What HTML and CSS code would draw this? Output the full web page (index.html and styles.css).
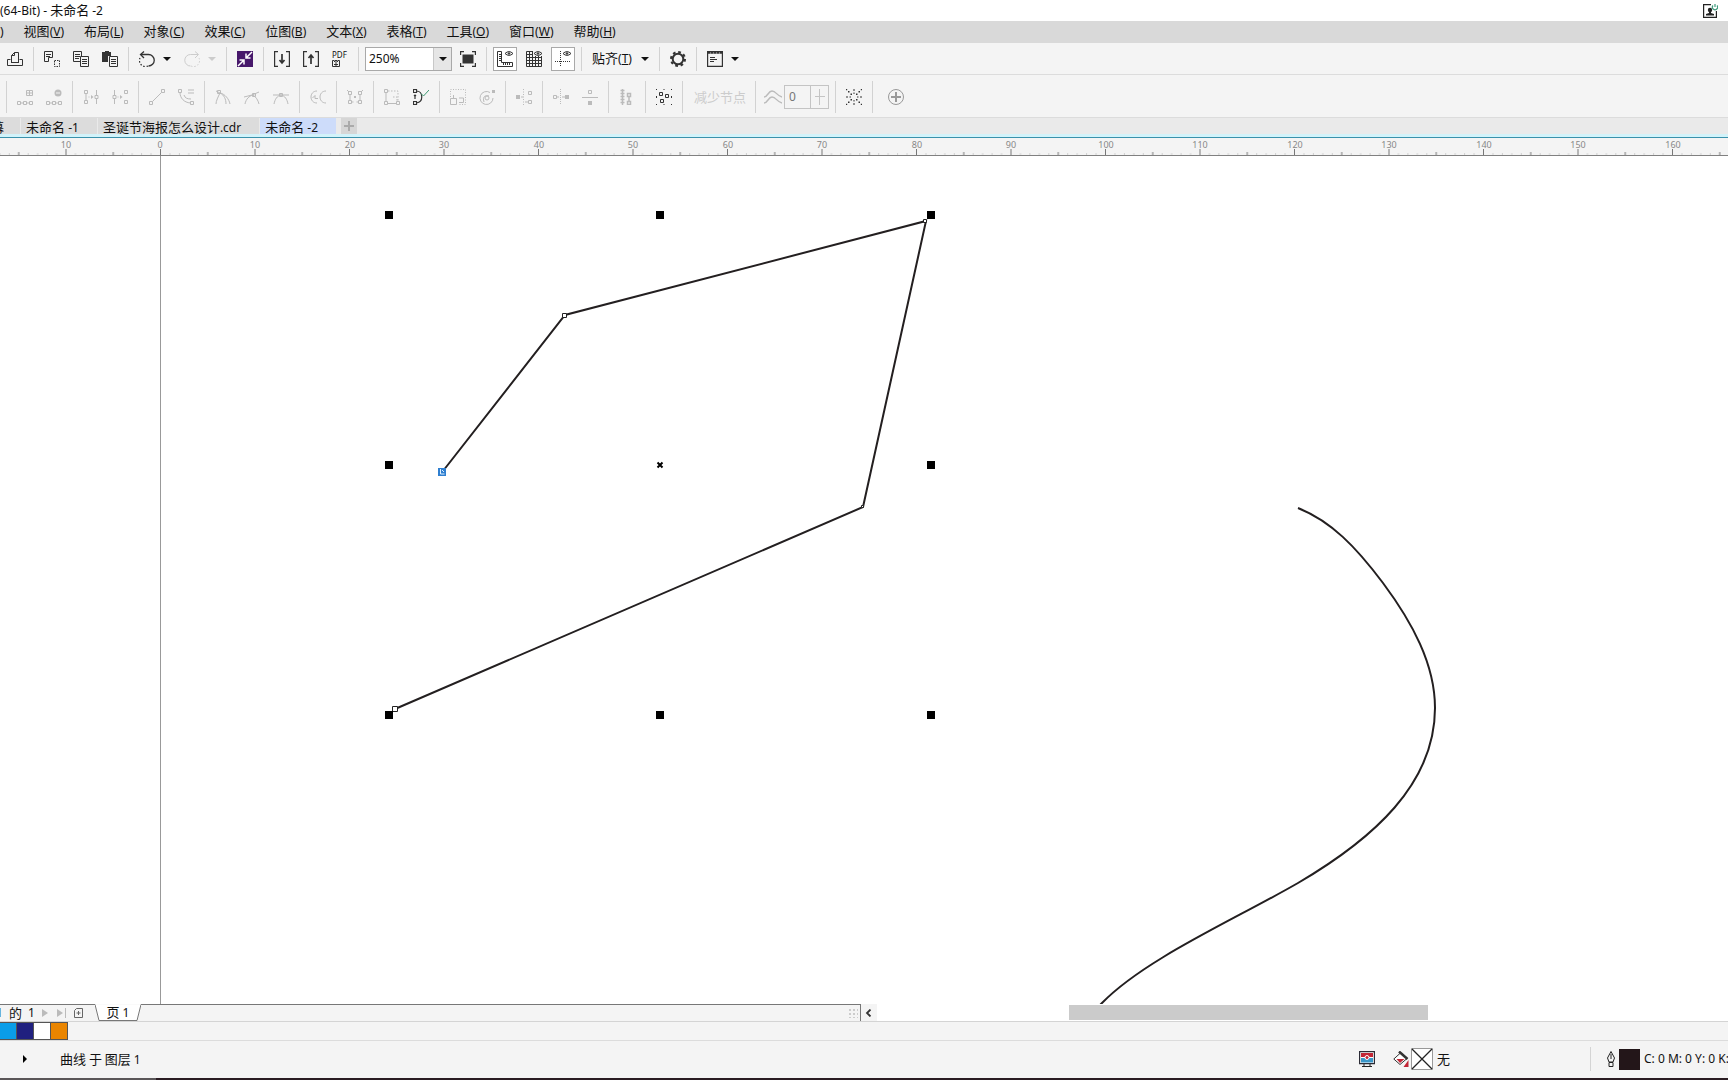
FILE: index.html
```html
<!DOCTYPE html>
<html lang="zh-CN">
<head>
<meta charset="utf-8">
<title>(64-Bit) - 未命名 -2</title>
<link rel="stylesheet" href="styles.css">
</head>
<body>
<div class="app">
  <header class="titlebar">
    <h1 class="title"><span class="latin">(64-Bit) - </span>未命名<span class="latin"> -2</span></h1>
    <button class="account" aria-label="账户">
      <svg class="icon" viewBox="0 0 16 16"><path d="M9 1.600H1.600v12.800h12.800V8" fill="none" stroke="#222" stroke-width="1.200"/><circle cx="8" cy="7" r="2.200" fill="#222"/><path d="M7 8h2v2l3 1v1.500H4V11l3-1z" fill="#222"/><path d="M11 2.500a2.600 2.600 0 1 0 4 0M13 1v3" fill="none" stroke="#3f9a7c" stroke-width="1.200"/></svg>
    </button>
  </header>

  <nav class="menubar">
    <button class="menu"><span class="latin">)</span></button>
    <button class="menu">视图<span class="latin">(<u>V</u>)</span></button>
    <button class="menu">布局<span class="latin">(<u>L</u>)</span></button>
    <button class="menu">对象<span class="latin">(<u>C</u>)</span></button>
    <button class="menu">效果<span class="latin">(<u>C</u>)</span></button>
    <button class="menu">位图<span class="latin">(<u>B</u>)</span></button>
    <button class="menu">文本<span class="latin">(<u>X</u>)</span></button>
    <button class="menu">表格<span class="latin">(<u>T</u>)</span></button>
    <button class="menu">工具<span class="latin">(<u>O</u>)</span></button>
    <button class="menu">窗口<span class="latin">(<u>W</u>)</span></button>
    <button class="menu">帮助<span class="latin">(<u>H</u>)</span></button>
  </nav>

  <div class="toolbar standard" role="toolbar" aria-label="标准">
    <button class="tool" aria-label="打印"><svg class="icon" viewBox="0 0 16 16"><path d="M3.500 8.500h-3v6h15v-6h-3M4.500 11.500v-7l3-3h4v10zM4 11.500h8M4.500 4.500h3v-3" fill="none"/></svg></button>
    <i class="sep"></i>
    <button class="tool" aria-label="剪切"><svg class="icon" viewBox="0 0 16 16"><path d="M.500 .500h8v6h-4v4h-4zM2 3.500h5M2 5.500h4" fill="none"/><path d="M10.500 9.500h5v6h-5z" fill="none" stroke-dasharray="1.500 1"/></svg></button>
    <button class="tool" aria-label="复制"><svg class="icon" viewBox="0 0 16 16"><path d="M7 10.500H.500V.500h8V5M2 3.500h5M2 5.500h5M2 7.500h4M7.500 5.500h8v10h-8zM9 8.500h5M9 10.500h5M9 12.500h5" fill="none"/></svg></button>
    <button class="tool" aria-label="粘贴"><svg class="icon" viewBox="0 0 16 16"><path d="M0 1h3V0h4v1h2v4H6v6H0z" stroke="none"/><path d="M7.500 5.500h8v10h-8zM9 8.500h5M9 10.500h5M9 12.500h5" fill="#f4f4f4"/></svg></button>
    <i class="sep"></i>
    <button class="tool" aria-label="撤消"><svg class="icon" viewBox="0 0 16 16"><path d="M2 3.500h7.500a5.500 5.500 0 0 1 0 11.500" fill="none" stroke-width="1.300"/><path d="M9 15a6 6 0 0 1-8-8" fill="none" stroke-dasharray="1.500 1.800" stroke-width="1.300"/><path d="M5 .5 1.500 3.500 5 7" fill="none" stroke-width="1.300"/></svg></button>
    <button class="drop" aria-label="撤消列表"></button>
    <button class="tool faint" aria-label="重做" disabled><svg class="icon" viewBox="0 0 16 16"><path d="M14 3.500H6.500a5.500 5.500 0 0 0 0 11.500" fill="none"/><path d="M7 15a6 6 0 0 0 8-8" fill="none" stroke-dasharray="1.500 1.800"/><path d="M11 .5l3.500 3L11 7" fill="none"/></svg></button>
    <button class="drop faint" aria-label="重做列表" disabled></button>
    <i class="sep"></i>
    <button class="tool" aria-label="搜索内容"><svg class="icon" viewBox="0 0 16 16"><path d="M0 0h16v16H0z" fill="#47186b" stroke="none"/><path d="M15 1 9.500 6.500M9 2.500V7h4.500M1 15l5.500-5.500M2.500 9H7v4.500" fill="none" stroke="#fff" stroke-width="1.500"/></svg></button>
    <i class="sep"></i>
    <button class="tool" aria-label="导入"><svg class="icon" viewBox="0 0 16 16"><path d="M4 .600H.600v14.800H4M12 .600h3.400v14.800H12" fill="none" stroke-width="1.200"/><path d="M8 3v9M5.500 9 8 12l2.500-3" fill="none" stroke-width="1.700"/></svg></button>
    <button class="tool" aria-label="导出"><svg class="icon" viewBox="0 0 16 16"><path d="M4 .600H.600v14.800H4M12 .600h3.400v14.800H12" fill="none" stroke-width="1.200"/><path d="M8 13V4M5.500 7 8 4l2.500 3" fill="none" stroke-width="1.700"/></svg></button>
    <button class="tool pdf" aria-label="发布为 PDF"><span class="pdf-text">PDF</span><svg class="pdf-icon" viewBox="0 0 8 8"><path d="M2.500 1.500h-2v6h7v-6h-2M4 7V1M2 3l2-2 2 2M2 5.500h4" fill="none"/></svg></button>
    <i class="sep"></i>
    <div class="combo">
      <input class="combo-input" type="text" value="250%" aria-label="缩放级别">
      <button class="combo-btn" aria-label="缩放列表"></button>
    </div>
    <button class="tool" aria-label="全屏预览"><svg class="icon" viewBox="0 0 16 16"><path d="M2.500 3.500h11v9h-11z" stroke="none"/><path d="M0 .600h4M.600 0v4M12 .600h4M15.400 0v4M0 15.400h4M.600 16v-4M12 15.400h4M15.400 16v-4" stroke-width="1.200"/></svg></button>
    <i class="sep"></i>
    <button class="tool active" aria-label="显示标尺"><svg class="icon" viewBox="0 0 16 16"><path d="M.500 .500h4v11h11v4H.500zM2 3.500h2.500M2 5.500h2.500M2 7.500h2.500M2 9.500h2.500M6.500 12v2M8.500 12v2M10.500 12v2M12.500 12v2" fill="none"/><path d="M8 2.500q4-3.800 8 0-4 3.800-8 0z" fill="none"/><circle cx="12" cy="2.500" r=".8"/></svg></button>
    <button class="tool" aria-label="显示网格"><svg class="icon" viewBox="0 0 16 16"><path d="M7 .500H.500v15h15V5M3.500 0v16M6.500 0v16M9.500 5v11M12.500 5v11M0 3.500h7M0 6.500h16M0 9.500h16M0 12.500h16" fill="none"/><path d="M8 2.500q4-3.800 8 0-4 3.800-8 0z" fill="none"/><circle cx="12" cy="2.500" r=".8"/></svg></button>
    <button class="tool active" aria-label="显示辅助线"><svg class="icon" viewBox="0 0 16 16"><path d="M5.500 0v16M0 10.500h16" fill="none" stroke-dasharray="1 1"/><path d="M8 2.500q4-3.800 8 0-4 3.800-8 0z" fill="none"/><circle cx="12" cy="2.500" r=".8"/></svg></button>
    <i class="sep"></i>
    <button class="snap">贴齐<span class="latin">(<u>T</u>)</span></button>
    <button class="drop" aria-label="贴齐列表"></button>
    <i class="sep"></i>
    <button class="tool" aria-label="选项"><svg class="icon" viewBox="0 0 16 16"><circle cx="8" cy="8" r="5.300" fill="none" stroke-width="2"/><circle cx="8" cy="8" r="7" fill="none" stroke-width="2" stroke-dasharray="2.750 2.750"/></svg></button>
    <i class="sep"></i>
    <button class="tool" aria-label="应用程序启动器"><svg class="icon" viewBox="0 0 16 16"><path d="M.600 .600h14.800v14.800H.600z" fill="none" stroke-width="1.200"/><path d="M1 2h14M3 6.500h5M3 8.500h7M3 10.500h4" fill="none"/><path d="M1 1.500h14" stroke-dasharray="2 1" stroke-width="2"/></svg></button>
    <button class="drop" aria-label="启动器列表"></button>
  </div>

  <div class="toolbar property" role="toolbar" aria-label="属性栏">
    <i class="sep"></i>
    <button class="tool dim" aria-label="添加节点"><svg class="icon" viewBox="0 0 16 16"><path d="M.500 12.500h3v3h-3zM6.500 12.500h3v3h-3zM12.500 12.500h3v3h-3zM3.500 14h3M9.500 14h3M9.500 1.500h6v5h-6zM12.500 1v6M9 4h7" fill="none"/></svg></button>
    <button class="tool dim" aria-label="删除节点"><svg class="icon" viewBox="0 0 16 16"><path d="M.500 12.500h3v3h-3zM6.500 12.500h3v3h-3zM12.500 12.500h3v3h-3zM3.500 14h3M9.500 14h3" fill="none"/><circle cx="12" cy="4" r="3.500" stroke="none"/><path d="M10 4h4" stroke="#f4f4f4"/></svg></button>
    <i class="sep"></i>
    <button class="tool dim" aria-label="连接节点"><svg class="icon" viewBox="0 0 16 16"><path d="M1.500 1.500h3v3h-3zM1.500 11.500h3v3h-3zM3 5v6M13.500 1v5M12 6.500h3v3h-3zM13.500 10v5" fill="none"/><path d="M5.500 7.500h1v1h-1zM8 6l2.500 2L8 10z" stroke="none"/></svg></button>
    <button class="tool dim" aria-label="断开曲线"><svg class="icon" viewBox="0 0 16 16"><path d="M2.500 1v5M1 6.500h3v3H1zM2.500 10v5M12.500 1.500h3v3h-3zM12.500 11.500h3v3h-3z" fill="none"/><path d="M5.500 7.500h1v1h-1zM8 6l2.500 2L8 10z" stroke="none"/></svg></button>
    <i class="sep"></i>
    <button class="tool dim" aria-label="转换为线条"><svg class="icon" viewBox="0 0 16 16"><path d="M.500 12.500h3v3h-3zM12.500 .500h3v3h-3zM3.500 12.500l9-9" fill="none"/></svg></button>
    <button class="tool dim" aria-label="转换为曲线"><svg class="icon" viewBox="0 0 16 16"><path d="M.500 .500h3v3h-3zM12.500 12.500h3v3h-3zM2 3.500C2 9 6 13.500 12.500 14M6 6c1 3 3 4 7 4M10 1h6M10 4h6" fill="none"/></svg></button>
    <i class="sep"></i>
    <button class="tool dim" aria-label="尖突节点"><svg class="icon" viewBox="0 0 16 16"><path d="M2.500 1.500h3v3h-3zM1 2l4 2c5 1 9 6 10 11M5 4c-2 4-4 8-4 11M5 4c4 2 6 6 6 11" fill="none"/></svg></button>
    <button class="tool dim" aria-label="平滑节点"><svg class="icon" viewBox="0 0 16 16"><path d="M8.500 4.500h3v3h-3zM0 8l8-2 7-3M1 15c1-5 4-8 8-9 3 2 5 5 6 9" fill="none"/></svg></button>
    <button class="tool dim" aria-label="对称节点"><svg class="icon" viewBox="0 0 16 16"><path d="M6.500 4.500h3v3h-3zM0 6h16M1 15c1-5 3-8 7-9 4 1 6 4 7 9" fill="none"/></svg></button>
    <i class="sep"></i>
    <button class="tool dim" aria-label="反转方向"><svg class="icon" viewBox="0 0 16 16"><path d="M7 2C-1 2-1 14 7 14M16 2C8 2 8 14 16 14M5 6.500 2.500 9M5 6.500v3h3" fill="none"/></svg></button>
    <i class="sep"></i>
    <button class="tool dim" aria-label="延长曲线使之闭合"><svg class="icon" viewBox="0 0 16 16"><path d="M1.500 2.500h3v3h-3zM11.500 2.500h3v3h-3zM1.500 11.500h3v3h-3zM11.500 11.500h3v3h-3zM3 6v5M13 6v5M4.500 13h2M9.500 13h2M0 1l2 2M16 1l-2 2" fill="none"/><path d="M7 7h2v2H7z" stroke="none"/></svg></button>
    <i class="sep"></i>
    <button class="tool dim" aria-label="提取子路径"><svg class="icon" viewBox="0 0 16 16"><path d="M.500 .500h3v3h-3zM.500 12.500h3v3h-3zM12.500 12.500h3v3h-3zM2 4v8M4 14.500h8" fill="none"/><path d="M4 2h10v10M9 8h4v4" fill="none" stroke-dasharray="1.500 1.500"/></svg></button>
    <button class="tool" aria-label="闭合曲线"><svg class="icon" viewBox="0 0 16 16"><path d="M.500 .500h3v3h-3zM.500 12.500h3v3h-3zM3.500 2C10 2 11 13 3.500 14M2 6v4M1 7l1-1 1 1" fill="none" stroke-width="1.200"/><path d="M8 4.500 10.500 7 16 1" fill="none" stroke="#3f9a72"/></svg></button>
    <i class="sep"></i>
    <button class="tool dim" aria-label="延展与缩放节点"><svg class="icon" viewBox="0 0 16 16"><path d="M.500 9.500h6v6h-6zM9 9h4.500v4.500H9M3.500 9V6" fill="none"/><path d="M.500 8V.500h15v15H8" fill="none" stroke-dasharray="1 1.500"/></svg></button>
    <button class="tool dim" aria-label="旋转与倾斜节点"><svg class="icon" viewBox="0 0 16 16"><path d="M11 3.500A6.500 6.500 0 1 0 14 9M5 13c-2-6 2-7 5-6" fill="none"/><circle cx="8" cy="9" r="2" fill="none"/><path d="M13 1h3v3h-3z" stroke="none"/></svg></button>
    <i class="sep"></i>
    <button class="tool dim" aria-label="对齐节点"><svg class="icon" viewBox="0 0 16 16"><path d="M0 6h4v4H0z" stroke="none"/><path d="M7.500 0v16" stroke-dasharray="1 1.500"/><path d="M12.500 2.500h3v3h-3zM12.500 11.500h3v3h-3zM5 8h2M9 13h3" fill="none"/></svg></button>
    <i class="sep"></i>
    <button class="tool dim" aria-label="水平反射节点"><svg class="icon" viewBox="0 0 16 16"><path d="M.500 6.500h3v3h-3zM4 8h2M9 8h3" fill="none"/><path d="M7.500 0v16" stroke-dasharray="1 1"/><path d="M12 6h4v4h-4z" stroke="none"/></svg></button>
    <button class="tool dim" aria-label="垂直反射节点"><svg class="icon" viewBox="0 0 16 16"><path d="M6.500 1.500h3v3h-3zM0 8.500h16" fill="none"/><path d="M6 12h4v4H6z" stroke="none"/></svg></button>
    <i class="sep"></i>
    <button class="tool dim" aria-label="弹性模式"><svg class="icon" viewBox="0 0 16 16"><path d="M3.500 0v16M1.500 1.500h4M1.500 4.500h4M1.500 7.500h4M1.500 10.500h4M1.500 13.500h4M8.500 4.500h3v3h-3zM8.500 12.500h3v3h-3zM10 8v4" fill="none" stroke-width="1.500"/></svg></button>
    <i class="sep"></i>
    <button class="tool" aria-label="选择所有节点"><svg class="icon" viewBox="0 0 16 16"><path d="M3.500 3.500h3v3h-3zM9.500 5.500h3v3h-3zM4.500 10.500h3v3h-3z" fill="none"/><path d="M0 .500h16M0 15.500h16" stroke-dasharray="1 6.500"/><path d="M.500 7v2M15.500 7v2"/></svg></button>
    <i class="sep"></i>
    <button class="reduce" disabled>减少节点</button>
    <i class="sep"></i>
    <label class="smooth" for="smooth" aria-label="曲线平滑度"><svg class="icon wide" viewBox="0 0 18 16"><path d="M0 8c4 0 4-6 8-6s5 5 10 6M0 14c4 0 4-6 8-6s5 5 10 6" fill="none" stroke-width="1.400"/></svg></label>
    <div class="spin">
      <input class="spin-input" id="smooth" type="text" value="0">
      <button class="spin-btn" aria-label="调整"></button>
    </div>
    <i class="sep"></i>
    <button class="tool" aria-label="边框"><svg class="icon" viewBox="0 0 16 16"><path d="M4.500 4.500H6V6H4.500zM10 4.500h1.500V6H10zM4.500 10H6v1.500H4.500zM10 10h1.500v1.500H10zM0 0h1.200v1.200H0zM2 2h1.500v1.500H2zM14.800 0H16v1.200h-1.200zM12.500 2H14v1.500h-1.500zM0 14.800h1.200V16H0zM2 12.500h1.500V14H2zM14.800 14.800H16V16h-1.200zM12.500 12.500H14V14h-1.500zM7.500 0h1v2h-1zM7.500 3.500h1v1.500h-1zM7.500 11h1v1.500h-1zM7.500 14h1v2h-1zM0 7.500h2v1H0zM3.500 7.500H5v1H3.500zM11 7.500h1.500v1H11zM14 7.500h2v1h-2z" stroke="none"/></svg></button>
    <i class="sep"></i>
    <button class="tool add" aria-label="快速自定义"><svg class="icon" viewBox="0 0 16 16"><circle cx="8" cy="8" r="7.500" fill="none"/><path d="M8 3v10M3 8h10" stroke-width="2"/></svg></button>
  </div>

  <nav class="tabs">
    <button class="tab first">幕</button>
    <button class="tab">未命名<span class="latin"> -1</span></button>
    <button class="tab">圣诞节海报怎么设计<span class="latin">.cdr</span></button>
    <button class="tab selected">未命名<span class="latin"> -2</span></button>
    <button class="new-tab" aria-label="新建文档"></button>
  </nav>

  <svg class="ruler" aria-label="标尺">
    <defs>
      <pattern id="ticks" x="160" y="0" width="94.500" height="18" patternUnits="userSpaceOnUse">
        <path d="M.5 11v6M47.750 14v3" stroke="#777"/>
        <path d="M9.950 15.500v1M19.400 15.500v1M28.850 15.500v1M38.300 15.500v1M57.200 15.500v1M66.650 15.500v1M76.100 15.500v1M85.550 15.500v1" stroke="#aaa"/>
      </pattern>
    </defs>
    <rect class="ticks" width="100%" height="17"/>
    <g class="ruler-labels">
      <text x="66" y="10">10</text><text x="160" y="10">0</text><text x="255" y="10">10</text><text x="350" y="10">20</text><text x="444" y="10">30</text><text x="539" y="10">40</text><text x="633" y="10">50</text><text x="728" y="10">60</text><text x="822" y="10">70</text><text x="917" y="10">80</text><text x="1011" y="10">90</text><text x="1106" y="10">100</text><text x="1200" y="10">110</text><text x="1295" y="10">120</text><text x="1389" y="10">130</text><text x="1484" y="10">140</text><text x="1578" y="10">150</text><text x="1673" y="10">160</text>
    </g>
  </svg>

  <svg class="canvas" aria-label="绘图窗口">
    <path class="page-edge" d="M160.500 0V4000"/>
    <path class="stroke" d="M443 315 565 159 926 65 863 351 395 553"/>
    <path class="stroke" d="M1298 352C1331 365 1356 391 1383 427C1412 466 1435 508 1435 552C1435 628 1373 683 1298 727C1232 765 1145 803 1102 847L1098 851"/>
    <path class="node" d="M562.500 157.500h4v4h-4zM923.500 63.500h3v3h-3zM861.500 349.500h2v2h-2zM392.500 550.500h5v5h-5z"/>
    <path class="node-active" d="M438 312h8v8h-8z"/>
    <path class="node-mark" d="M440.500 313v5h4M442 314l2 2"/>
    <path class="handles" d="M385 55h8v8h-8zM656 55h8v8h-8zM927 55h8v8h-8zM385 305h8v8h-8zM927 305h8v8h-8zM385 555h8v8h-8zM656 555h8v8h-8zM927 555h8v8h-8z"/>
    <path class="center" d="M657.500 306.500l5 5M662.500 306.500l-5 5"/>
  </svg>

  <div class="pagebar">
    <div class="pager">
      <span class="count"><span class="latin">1</span><span>的</span><span class="latin">1</span></span>
      <button class="nav" aria-label="下一页" disabled><svg viewBox="0 0 12 10"><path d="M2 1v8l6-4z"/></svg></button>
      <button class="nav" aria-label="最后一页" disabled><svg viewBox="0 0 12 10"><path d="M1 1v8l6-4z"/><path d="M9.500 0v10" stroke="#bbb"/></svg></button>
      <button class="nav" aria-label="添加页"><svg viewBox="0 0 12 10"><path d="M4.500 .500h6v9h-8v-7zM6.500 3v4M4.500 5h4" fill="none" stroke="#666"/></svg></button>
    </div>
    <button class="page-tab"><svg class="page-shape" viewBox="0 0 46 17"><path d="M0 .500 4 16.500H42L46 .500z" fill="#fff" stroke="none"/><path d="M0 .500 4 16.500H42L46 .500" fill="none" stroke="#777"/></svg><span class="page-name">页 <span class="latin">1</span></span></button>
    <div class="page-rest"><i class="grip"></i></div>
    <button class="scroll-left" aria-label="向左滚动"><svg viewBox="0 0 8 8"><path d="M5.500 .500 2 4l3.500 3.500" fill="none" stroke="#333" stroke-width="1.800"/></svg></button>
    <div class="track"><div class="thumb"></div></div>
  </div>

  <div class="palette">
    <button class="swatch cyan" aria-label="青"></button>
    <button class="swatch navy" aria-label="蓝"></button>
    <button class="swatch white" aria-label="白"></button>
    <button class="swatch orange" aria-label="橙"></button>
  </div>

  <footer class="status">
    <button class="expand" aria-label="展开"></button>
    <span class="object">曲线 于 图层 <span class="latin">1</span></span>
    <div class="status-right">
      <svg class="icon proof" viewBox="0 0 16 16"><path d="M.600 .600h14.800v12H.600z" fill="#fff" stroke="#2b2b35" stroke-width="1.200"/><path d="M2 2h12v4H2z" fill="#c22636"/><path d="M2 7h12v4.500H2z" fill="#3a97c9"/><path d="M2 6.500h12" stroke="#fff"/><circle cx="8" cy="6.500" r="2" fill="#c22636" stroke="#fff"/><path d="M5 13v2M11 13v2M3 15.500h10" stroke="#222"/></svg>
      <svg class="icon bucket" viewBox="0 0 16 16"><path d="M8 1.500 14 7.500 7 13.500.8 8z" fill="#fff" stroke="#333"/><path d="M6 .500 14.500 8" stroke="#333" stroke-width="2.500"/><path d="M3.500 8h8L7 12z" fill="#c22636"/><path d="M15.500 9v7h-5z" fill="#c22636"/></svg>
      <svg class="nofill" viewBox="0 0 22 22"><path d="M.500 .500h21v21H.500z" fill="#fff" stroke="#999"/><path d="M1 1l20 20M21 1 1 21" stroke="#222" stroke-width="1.300"/></svg>
      <span class="fill-name">无</span>
      <i class="status-sep"></i>
      <svg class="pen" viewBox="0 0 10 16"><path d="M5 .500 8.500 7 7 11H3L1.500 7zM3 11.500h4v4H3zM5 3v5" fill="none" stroke="#222"/></svg>
      <i class="outline-color"></i>
      <span class="outline-name latin">C: 0 M: 0 Y: 0 K:</span>
    </div>
  </footer>
  <div class="taskbar-edge"><i class="edge-light"></i></div>
</div>
</body>
</html>
```
FILE: styles.css
```css
*, *::before { box-sizing: border-box; }

body {
  margin: 0;
  background: #fff;
  color: #111;
  font: 13px/16px "Noto Sans CJK SC", sans-serif;
}

button, input {
  margin: 0;
  padding: 0;
  border: 0;
  border-radius: 0;
  background: none;
  color: inherit;
  font: inherit;
  text-align: left;
  white-space: nowrap;
}

.app {
  display: flex;
  flex-direction: column;
  min-height: 100vh;
  overflow: hidden;
}

.latin { font-family: "Noto Sans", sans-serif; font-size: 12px; white-space: pre; }
.icon { display: block; flex: none; width: 16px; height: 16px; }
.icon.wide { width: 18px; }

/* Title and menus */
.titlebar {
  display: flex;
  align-items: center;
  justify-content: space-between;
  height: 21px;
  padding-right: 10px;
}
.title { margin: 0; font-size: 13px; font-weight: 400; }

.menubar {
  display: flex;
  align-items: center;
  gap: 20px;
  height: 22px;
  padding-bottom: 2px;
  background: #d9d9d9;
}

/* Toolbars */
.toolbar {
  display: flex;
  align-items: center;
  background: #f4f4f4;
  border-bottom: 1px solid #dcdcdc;
}
.standard { height: 32px; padding-left: 1px; }
.property { height: 43px; padding: 1px 0 0 3px; }

.tool {
  display: flex;
  flex: none;
  align-items: center;
  width: 29px;
  height: 24px;
  padding-left: 6px;
}
.tool svg { fill: #333; stroke: #333; }
.tool.dim svg, .tool.add svg { fill: #bbb; stroke: #bbb; }
.tool.faint svg { stroke: #ccc; }
.tool.add { margin-left: 5px; }
.tool.add svg { stroke: #999; }
.tool.active {
  width: 24px;
  margin: 0 3px 0 2px;
  padding-left: 3px;
  background: #fff;
  border: 1px solid #a9a9a9;
}

.tool.pdf { flex-direction: column; align-items: flex-start; padding: 4px 0 0 6px; }
.pdf-text { font: 8px/8px "Noto Sans", sans-serif; }
.pdf-icon { width: 8px; height: 8px; }

.sep { flex: none; width: 1px; height: 24px; margin: 0 4px 0 3px; background: #d2d2d2; }
.property .sep { height: 32px; }

.drop { flex: none; width: 16px; height: 24px; padding-left: 1px; }
.drop::before, .combo-btn::before {
  content: "";
  display: block;
  width: 8px;
  border: 4px solid transparent;
  border-top-color: #111;
  border-bottom: 0;
}
.drop.faint::before { border-top-color: #ccc; }

.combo {
  display: flex;
  width: 87px;
  height: 24px;
  margin: 0 2px;
  background: #fff;
  border: 1px solid #a9a9a9;
}
.combo-input { flex: 1; min-width: 0; padding-left: 3px; font: 12px/16px "Noto Sans", sans-serif; }
.combo-btn { width: 18px; padding-left: 5px; background: #e6e6e6; border-left: 1px solid #c8c8c8; }

.snap { width: 54px; padding-left: 6px; }
.reduce { width: 65px; padding-left: 7px; font-size: 13px; color: #ccc; }

.smooth { width: 24px; padding-left: 4px; }
.smooth svg { stroke: #bbb; }
.spin {
  display: flex;
  width: 45px;
  height: 24px;
  margin-right: 3px;
  border: 1px solid #c4c4c4;
}
.spin-input { flex: 1; min-width: 0; padding-left: 4px; color: #777; font: 12px/16px "Noto Sans", sans-serif; }
.spin-btn {
  width: 18px;
  border-left: 1px solid #c4c4c4;
  background:
    linear-gradient(#c4c4c4, #c4c4c4) center / 10px 1px no-repeat,
    linear-gradient(#c4c4c4, #c4c4c4) center / 1px 16px no-repeat;
}

/* Document tabs */
.tabs {
  display: flex;
  height: 19px;
  background: #eaeaea;
  border-bottom: 3px solid #d2f3fa;
}
.tab { padding: 1px 18px 0 5px; margin-right: 1px; background: #dcdcdc; }
.tab.first { width: 20px; padding: 1px 0 0; text-indent: -9px; overflow: hidden; }
.tab.selected { background: #cddcfa; }
.new-tab {
  width: 16px;
  margin-left: 4px;
  background:
    linear-gradient(#aaa, #aaa) center / 10px 2px no-repeat,
    linear-gradient(#aaa, #aaa) center / 2px 10px no-repeat,
    #d6d6d6;
}

/* Ruler and drawing */
.ruler {
  flex: none;
  width: 100%;
  height: 19px;
  background: #f4f4f4;
  border-top: 1px solid #3a91ab;
  border-bottom: 1px solid #808080;
}
.ticks { fill: url(#ticks); }
.ruler-labels { fill: #888; font: 9px "Noto Sans", sans-serif; text-anchor: middle; }

.canvas { flex: 1; width: 100%; min-height: 0; background: #fff; }
.page-edge { stroke: #999; }
.stroke { fill: none; stroke: #231f20; stroke-width: 2; }
.node { fill: #fff; stroke: #222; }
.node-active { fill: #2f7fd0; }
.node-mark { fill: none; stroke: #dff0ff; }
.center { stroke: #000; stroke-width: 2; }

/* Page navigator and scroll bar */
.pagebar { display: flex; height: 18px; border-bottom: 1px solid #d4d4d4; }
.pager {
  display: flex;
  align-items: center;
  width: 95px;
  background: #f4f4f4;
  border-top: 1px solid #777;
}
.count { display: flex; align-items: center; gap: 6px; width: 44px; margin-left: -4px; }
.nav { width: 16px; }
.nav svg { display: block; width: 12px; height: 10px; fill: #bbb; }
.page-tab { position: relative; width: 46px; background: #f4f4f4; text-align: center; }
.page-shape { position: absolute; top: 0; left: 0; width: 46px; height: 17px; }
.page-name { position: relative; }
.page-rest {
  display: flex;
  justify-content: flex-end;
  align-items: center;
  flex: 0 1 720px;
  padding-right: 2px;
  background: #f4f4f4;
  border-top: 1px solid #777;
  border-right: 1px solid #777;
}
.grip { width: 10px; height: 10px; background: radial-gradient(circle, #ccc 1px, transparent 1px) 0 0 / 4px 4px; }
.scroll-left { width: 16px; padding-left: 4px; background: #f4f4f4; }
.scroll-left svg { display: block; width: 8px; height: 8px; }
.track { display: flex; flex: 1; padding: 1px 300px 1px 192px; background: #fff; }
.thumb { flex: 1; background: #cbcbcb; }

/* Palette */
.palette { display: flex; height: 19px; background: #f4f4f4; border-bottom: 1px solid #dcdcdc; }
.swatch { width: 17px; height: 18px; border: 1px solid #555; border-left: 0; }
.cyan { background: #0a9de8; }
.navy { background: #20207f; }
.white { background: #fff; }
.orange { background: #ea8500; }

/* Status bar */
.status { display: flex; align-items: center; height: 37px; padding-bottom: 1px; background: #f4f4f4; }
.expand { width: 60px; padding-left: 23px; }
.expand::before {
  content: "";
  display: block;
  width: 4px;
  border: 4px solid transparent;
  border-left-color: #000;
  border-right: 0;
}
.status-right { display: flex; align-items: center; margin-left: auto; }
.proof { margin-right: 18px; }
.nofill { width: 22px; height: 22px; margin: 0 4px 0 2px; }
.fill-name { width: 153px; }
.status-sep { width: 1px; height: 24px; margin-right: 15px; background: #d4d4d4; }
.pen { width: 10px; height: 16px; margin-right: 3px; }
.outline-color { width: 21px; height: 21px; background: #231619; }
.outline-name { width: 88px; padding-left: 4px; }
.taskbar-edge { height: 2px; background: #2a1c22; }
.edge-light { display: block; width: 156px; height: 2px; background: #5a5658; }
```
